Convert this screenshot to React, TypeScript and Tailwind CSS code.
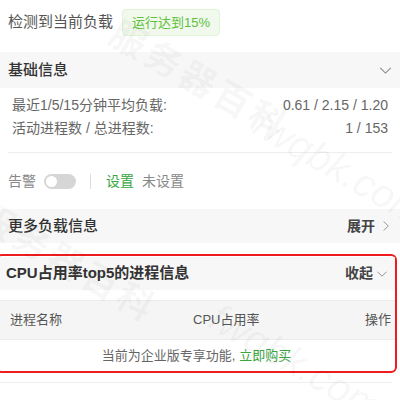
import React from "react";

const font = { fontFamily: '"Liberation Sans", "Noto Sans CJK SC", sans-serif' };

function ChevronDown({ className = "" }: { className?: string }) {
  return (
    <svg viewBox="0 0 14 8" className={className} fill="none" stroke="currentColor" strokeWidth="1.2">
      <path d="M1 1l6 6 6-6" />
    </svg>
  );
}

function ChevronRight({ className = "" }: { className?: string }) {
  return (
    <svg viewBox="0 0 8 14" className={className} fill="none" stroke="currentColor" strokeWidth="1.2">
      <path d="M1 1l6 6-6 6" />
    </svg>
  );
}

function Watermark() {
  return (
    <div className="pointer-events-none absolute inset-0 overflow-hidden select-none">
      <div className="absolute left-[126px] top-[8px] rotate-[30deg] origin-top-left text-[36px] font-bold tracking-[4px] text-black/[0.045]">
        服务器百科
      </div>
      <div className="absolute left-[272px] top-[94px] rotate-[30deg] origin-top-left text-[40px] italic text-black/[0.045]">
        fwqbk.com
      </div>
      <div className="absolute left-[-6px] top-[190px] rotate-[30deg] origin-top-left text-[36px] font-bold tracking-[4px] text-black/[0.045]">
        服务器百科
      </div>
      <div className="absolute left-[228px] top-[288px] rotate-[30deg] origin-top-left text-[40px] italic text-black/[0.045]">
        fwqbk.com
      </div>
    </div>
  );
}

export default function App() {
  return (
    <div className="relative h-[400px] w-[400px] overflow-hidden bg-white" style={font}>
      {/* load status */}
      <div className="flex items-center gap-[9px] px-[8px] pt-[9px]">
        <span className="text-[15px] text-[#555]">检测到当前负载</span>
        <span className="flex h-[27px] items-center rounded-[4px] border border-[#e1f3d8] bg-[#f0f9eb] px-[9px] text-[13px] text-[#5fbf3f]">
          运行达到15%
        </span>
      </div>

      {/* basic info */}
      <div className="mt-[16px] flex h-[36px] items-center justify-between bg-[#f7f7f7] pl-[8px] pr-[8px]">
        <span className="text-[15px] font-medium text-[#333]">基础信息</span>
        <ChevronDown className="h-[7px] w-[13px] text-[#888]" />
      </div>
      <div className="px-[12px] pt-[6px] text-[14px] leading-[23px] text-[#666]">
        <div className="flex justify-between">
          <span>最近1/5/15分钟平均负载:</span>
          <span>0.61 / 2.15 / 1.20</span>
        </div>
        <div className="flex justify-between">
          <span>活动进程数 / 总进程数:</span>
          <span>1 / 153</span>
        </div>
      </div>
      <div className="mx-[8px] mt-[12px] border-t border-[#eeeeee]" />

      {/* alarm */}
      <div className="flex h-[56px] items-center px-[8px] text-[14px]">
        <span className="text-[#888]">告警</span>
        <span className="ml-[8px] flex h-[15px] w-[32px] items-center rounded-full bg-[#d6d6d6] px-[2px]">
          <span className="h-[11px] w-[11px] rounded-full bg-white" />
        </span>
        <span className="ml-[14px] h-[15px] w-px bg-[#dcdcdc]" />
        <span className="ml-[15px] text-[#3aa53f]">设置</span>
        <span className="ml-[8px] text-[#888]">未设置</span>
      </div>

      {/* more load info */}
      <div className="flex h-[34px] items-center justify-between bg-[#f7f7f7] pl-[8px] pr-[11px]">
        <span className="text-[15px] font-medium text-[#333]">更多负载信息</span>
        <span className="flex items-center gap-[8px] text-[14px] font-semibold text-[#444]">
          展开
          <ChevronRight className="h-[12px] w-[6px] text-[#888]" />
        </span>
      </div>

      {/* top5 processes */}
      <div className="ml-[-4px] mr-[3px] mt-[11px] rounded-[6px] border-[2.5px] border-[#ee1c1c]">
        <div className="mt-[1px] flex h-[33px] items-center justify-between bg-[#f7f7f7] pl-[8px] pr-[7px]">
          <span className="text-[15px] font-semibold text-[#333]">CPU占用率top5的进程信息</span>
          <span className="flex items-center gap-[3px] text-[14px] font-semibold text-[#444]">
            收起
            <ChevronDown className="h-[6px] w-[12px] text-[#888]" />
          </span>
        </div>
        <div className="mt-[10px] grid h-[40px] grid-cols-[183px_1fr_auto] items-center border-t border-b border-[#ebebeb] bg-[#f5f5f5] pl-[12px] pr-[4px] text-[13px] text-[#555]">
          <span>进程名称</span>
          <span>CPU占用率</span>
          <span className="text-right">操作</span>
        </div>
        <div className="flex h-[31px] items-center justify-center text-[13px] text-[#666]">
          当前为企业版专享功能, <span className="ml-[4px] text-[#3aa53f]">立即购买</span>
        </div>
      </div>
      <div className="mt-[9px] mr-[8px] border-t border-[#eeeeee]" />

      <Watermark />
    </div>
  );
}
